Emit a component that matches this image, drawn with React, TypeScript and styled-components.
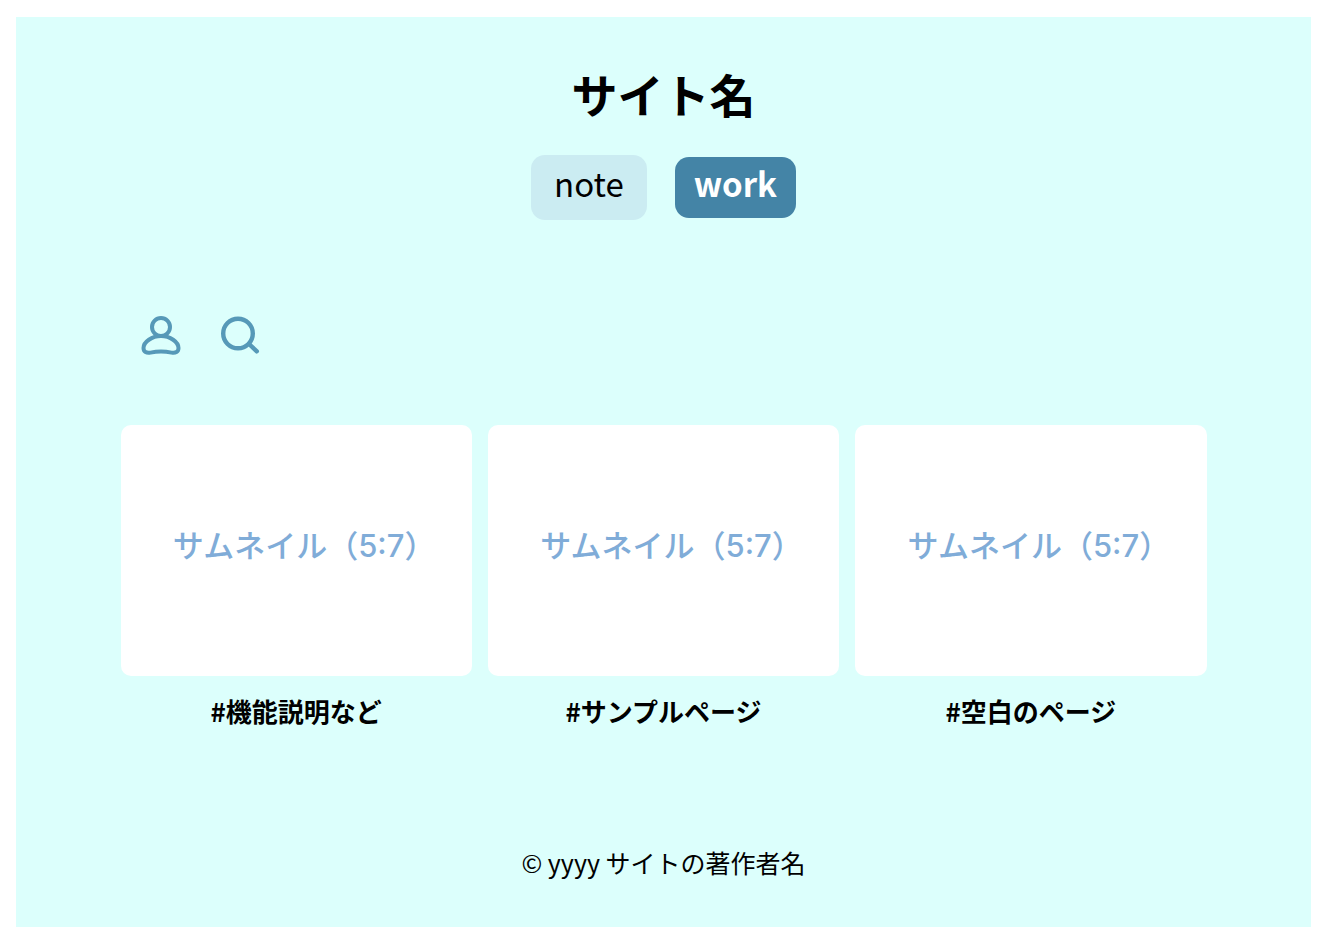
import React from "react";
import styled, { createGlobalStyle } from "styled-components";

const GlobalStyle = createGlobalStyle`
  *, *::before, *::after { box-sizing: border-box; }
  body {
    margin: 0;
    background: #fff;
    color: #000;
    font-family: "Noto Sans CJK JP", "Noto Sans", sans-serif;
  }
`;

const Page = styled.div`
  margin: 17px 17px 18px 16px;
  padding: 44px 24px 45px;
  background: #dcfffc;
`;

const Header = styled.header`
  display: flex;
  flex-direction: column;
  align-items: center;
  gap: 30px;
`;

const Title = styled.h1`
  margin: 0;
  font-size: 46px;
  line-height: 64px;
  font-weight: 700;
`;

const Nav = styled.nav`
  display: flex;
  align-items: center;
  gap: 28px;
`;

const NavLink = styled.a<{ $active?: boolean }>`
  padding: ${(p) => (p.$active ? "2px 19px 10px" : "4px 23px 12px")};
  border-radius: 14px;
  background: ${(p) => (p.$active ? "#4484a6" : "#cbecf2")};
  color: ${(p) => (p.$active ? "#fff" : "#000")};
  font-size: 33px;
  line-height: 49px;
  font-weight: ${(p) => (p.$active ? 700 : 400)};
  text-decoration: none;
`;

const Content = styled.main`
  max-width: 1086px;
  margin: 96px auto 0;
`;

const Tools = styled.div`
  display: flex;
  gap: 40px;
  padding-left: 20px;
`;

const IconButton = styled.button`
  display: flex;
  padding: 0;
  border: 0;
  background: none;
  color: #5699b8;
  cursor: pointer;
`;

const Grid = styled.div`
  display: grid;
  grid-template-columns: repeat(3, 1fr);
  gap: 16px;
  margin-top: 69px;
`;

const Card = styled.a`
  display: flex;
  flex-direction: column;
  gap: 15px;
  color: inherit;
  text-decoration: none;
  text-align: center;
`;

const Thumbnail = styled.span`
  display: flex;
  align-items: center;
  justify-content: center;
  aspect-ratio: 7 / 5;
  padding: 0 0 8px 16px;
  border-radius: 10px;
  background: #fff;
  color: #80acd8;
  font-family: Inter, "Noto Sans CJK JP", sans-serif;
  font-size: 31px;
  line-height: 48px;
  font-weight: 500;
`;

const Caption = styled.span`
  font-size: 26px;
  line-height: 40px;
  font-weight: 700;
`;

const Footer = styled.footer`
  margin-top: 111px;
  text-align: center;
  font-size: 25px;
  line-height: 40px;
`;

const items = ["#機能説明など", "#サンプルページ", "#空白のページ"];

function PersonIcon() {
  return (
    <svg width="40" height="40" viewBox="0 0 40 40" fill="none" stroke="currentColor" strokeWidth="4" aria-hidden="true">
      <circle cx="20" cy="11" r="9" />
      <path d="M20 20C11 20 2.5 26 2.5 32C2.5 36 5.5 37.3 9.5 36.6C16 35.2 24 35.2 30.5 36.6C34.5 37.3 37.5 36 37.5 32C37.5 26 29 20 20 20Z" />
    </svg>
  );
}

function SearchIcon() {
  return (
    <svg width="40" height="40" viewBox="0 0 40 40" fill="none" stroke="currentColor" strokeWidth="4.4" strokeLinecap="round" aria-hidden="true">
      <circle cx="17" cy="17.5" r="14.8" />
      <path d="M28 28L35.8 35.3" />
    </svg>
  );
}

export default function App() {
  return (
    <>
      <GlobalStyle />
      <Page>
        <Header>
          <Title>サイト名</Title>
          <Nav>
            <NavLink href="#note">note</NavLink>
            <NavLink href="#work" $active aria-current="page">work</NavLink>
          </Nav>
        </Header>
        <Content>
          <Tools>
            <IconButton type="button" aria-label="プロフィール"><PersonIcon /></IconButton>
            <IconButton type="button" aria-label="検索"><SearchIcon /></IconButton>
          </Tools>
          <Grid>
            {items.map((caption) => (
              <Card href="#" key={caption}>
                <Thumbnail>サムネイル（5:7）</Thumbnail>
                <Caption>{caption}</Caption>
              </Card>
            ))}
          </Grid>
        </Content>
        <Footer>© yyyy サイトの著作者名</Footer>
      </Page>
    </>
  );
}
